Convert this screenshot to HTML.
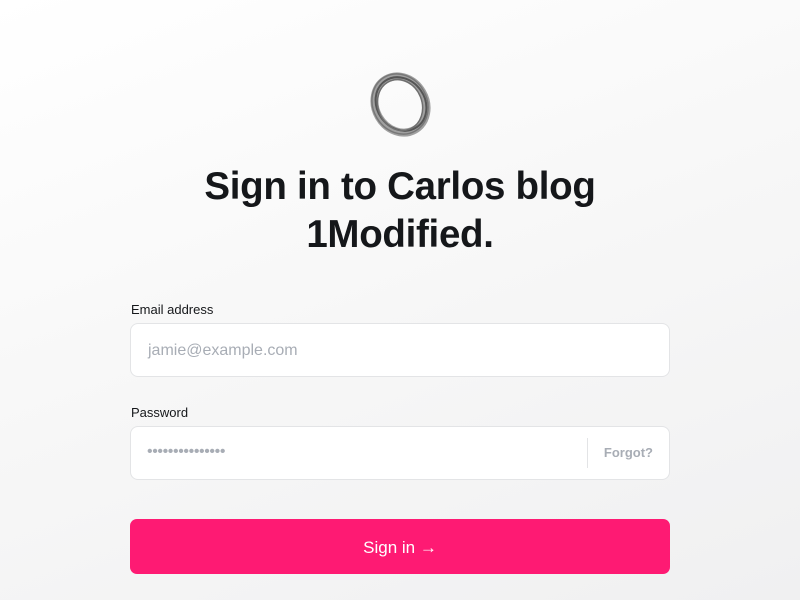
<!DOCTYPE html>
<html><head><meta charset="utf-8"><style>
html,body{margin:0;padding:0}
body{width:800px;height:600px;overflow:hidden;background:linear-gradient(160deg,#ffffff 0%,#f7f7f7 50%,#f0f0f1 100%);font-family:"Liberation Sans",sans-serif;position:relative}
h1{position:absolute;left:0;width:800px;top:163px;margin:0;text-align:center;font-size:38.5px;line-height:48px;font-weight:bold;color:#15171a;letter-spacing:-0.3px}
.lbl{position:absolute;left:131px;font-size:13px;color:#15171a}
.inp{position:absolute;left:130px;width:538px;height:52px;background:#fff;border:1px solid #e3e4e6;border-radius:8px;box-sizing:content-box}
.ph{position:absolute;left:17px;top:18px;font-size:16px;color:#a8adb5}
.dots{position:absolute;left:16px;top:16px;font-size:16px;color:#a8adb5;letter-spacing:-0.4px}
.sep{position:absolute;left:456px;top:11px;width:1px;height:30px;background:#e3e4e6}
.forgot{position:absolute;right:16px;top:18px;font-size:13px;font-weight:bold;color:#a8adb5}
.btn{position:absolute;left:130px;top:519px;width:540px;height:55px;background:#fe1a73;border-radius:7px;color:#fff;font-size:17px;text-align:center;line-height:57px}
</style></head><body>
<svg style="position:absolute;left:360px;top:66px" width="80" height="76" viewBox="0 0 80 76">
<g fill="none">
<ellipse cx="40.5" cy="38.5" rx="29" ry="25" transform="rotate(60 40.5 38.5)" stroke="#a0a0a0" stroke-width="8"/>
<ellipse cx="41" cy="38" rx="28" ry="24" transform="rotate(55 41 38)" stroke="#555" stroke-width="2"/>
<ellipse cx="40" cy="39" rx="26" ry="22" transform="rotate(68 40 39)" stroke="#6f6f6f" stroke-width="1.5"/>
<ellipse cx="40" cy="38" rx="31" ry="27" transform="rotate(60 40 38)" stroke="#777" stroke-width="1.5"/>
</g></svg>
<h1>Sign in to Carlos blog<br>1Modified.</h1>
<div class="lbl" style="top:302px">Email address</div>
<div class="inp" style="top:323px"><div class="ph">jamie@example.com</div></div>
<div class="lbl" style="top:405px">Password</div>
<div class="inp" style="top:426px"><div class="dots">•••••••••••••••</div><div class="sep"></div><div class="forgot">Forgot?</div></div>
<div class="btn">Sign in →</div>
</body></html>
